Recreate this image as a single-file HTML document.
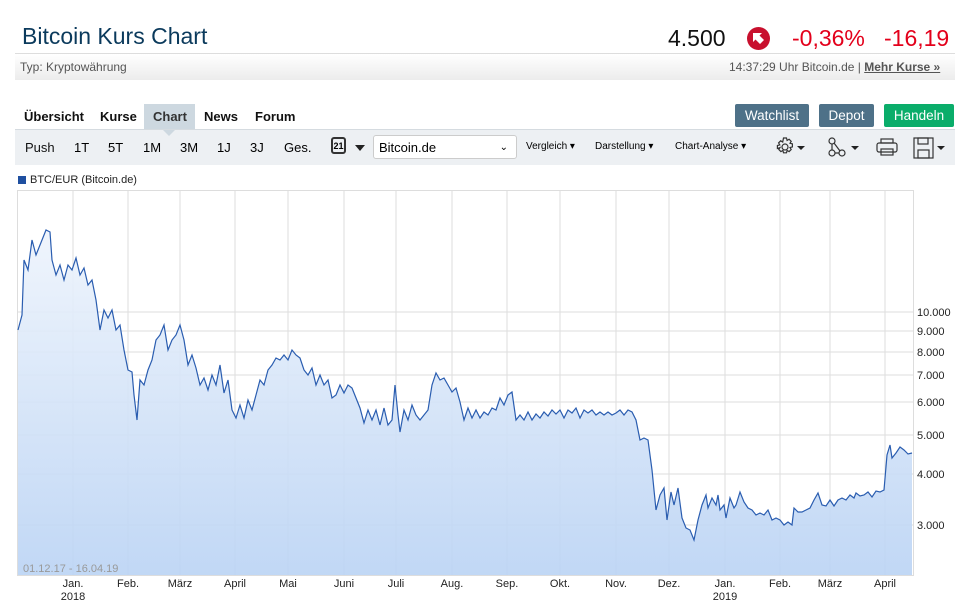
<!DOCTYPE html><html><head><meta charset="utf-8"><style>
body{margin:0;width:965px;height:608px;background:#fff;font-family:"Liberation Sans",sans-serif;position:relative;overflow:hidden}
.a{position:absolute;white-space:nowrap}
.b{font-weight:bold}
.btn{position:absolute;top:104px;height:23px;line-height:23px;color:#fff;font-size:13.5px;text-align:center;border-radius:2px}
</style></head><body>
<div class="a" style="left:22px;top:23px;font-size:23px;color:#0b3a5c">Bitcoin Kurs Chart</div>
<div class="a" style="left:668px;top:25px;font-size:23px;color:#111">4.500</div>
<div class="a" style="left:747px;top:27px;width:23px;height:23px;border-radius:50%;background:#c8102e"><svg width="23" height="23"><path d="M6 6 L15 6 L12.5 8.5 L17 13 L13 17 L8.5 12.5 L6 15 Z" fill="#fff"/></svg></div>
<div class="a" style="left:792px;top:25px;font-size:23px;color:#e3001b">-0,36%</div>
<div class="a" style="left:884px;top:25px;font-size:23px;color:#e3001b">-16,19</div>
<div class="a" style="left:15px;top:53px;width:940px;height:26px;background:linear-gradient(#fff,#ececec);border-top:1px solid #ddd"></div>
<div class="a" style="left:20px;top:60px;font-size:12px;color:#555">Typ: Kryptowährung</div>
<div class="a" style="left:729px;top:60px;font-size:12px;color:#555">14:37:29 Uhr Bitcoin.de | <b style="text-decoration:underline;color:#555">Mehr Kurse »</b></div>
<div class="a" style="left:144px;top:104px;width:51px;height:26px;background:#cdd8e0"></div>
<div class="a b" style="left:24px;top:109px;font-size:13px;color:#111">Übersicht</div>
<div class="a b" style="left:100px;top:109px;font-size:13px;color:#111">Kurse</div>
<div class="a b" style="left:153px;top:109px;font-size:13px;color:#333">Chart</div>
<div class="a b" style="left:204px;top:109px;font-size:13px;color:#111">News</div>
<div class="a b" style="left:255px;top:109px;font-size:13px;color:#111">Forum</div>
<div class="btn" style="left:735px;width:74px;background:#4e7188">Watchlist</div>
<div class="btn" style="left:819px;width:55px;background:#4e7188">Depot</div>
<div class="btn" style="left:884px;width:70px;background:#0aad6a">Handeln</div>
<div class="a" style="left:15px;top:129px;width:940px;height:35px;background:#edf0f3;border-top:1px solid #d5dbe0"></div>
<div class="a" style="left:163px;top:130px;width:0;height:0;border-left:6px solid transparent;border-right:6px solid transparent;border-top:6px solid #cdd8e0"></div>
<div class="a" style="left:25px;top:140px;font-size:13px;color:#111">Push</div>
<div class="a" style="left:74px;top:140px;font-size:13px">1T</div>
<div class="a" style="left:108px;top:140px;font-size:13px">5T</div>
<div class="a" style="left:143px;top:140px;font-size:13px">1M</div>
<div class="a" style="left:180px;top:140px;font-size:13px">3M</div>
<div class="a" style="left:217px;top:140px;font-size:13px">1J</div>
<div class="a" style="left:250px;top:140px;font-size:13px">3J</div>
<div class="a" style="left:284px;top:140px;font-size:13px">Ges.</div>
<div class="a" style="left:331px;top:137px;width:15px;height:17px;border:2px solid #333;border-radius:3px;box-sizing:border-box;font-size:9px;font-weight:bold;text-align:center;line-height:15px">21</div>
<div class="a" style="left:355px;top:145px;border-left:5px solid transparent;border-right:5px solid transparent;border-top:6px solid #222"></div>
<div class="a" style="left:373px;top:135px;width:144px;height:24px;background:#fff;border:1px solid #ccc;border-radius:3px;box-sizing:border-box;font-size:13px;line-height:23px;padding-left:5px">Bitcoin.de<span style="position:absolute;right:8px;font-size:10px">&#8964;</span></div>
<div class="a" style="left:526px;top:141px;font-size:10px">Vergleich ▾</div>
<div class="a" style="left:595px;top:141px;font-size:10px">Darstellung ▾</div>
<div class="a" style="left:675px;top:141px;font-size:10px">Chart-Analyse ▾</div>
<svg class="a" style="left:775px;top:136px" width="180" height="24" fill="none" stroke="#333" stroke-width="1.2">
<path d="M8.5 2h3l.6 2.4 2-1.2 2.1 2.1-1.2 2 2.4.6v3l-2.4.6 1.2 2-2.1 2.1-2-1.2-.6 2.4h-3l-.6-2.4-2 1.2-2.1-2.1 1.2-2L2.4 12.5v-3l2.4-.6-1.2-2 2.1-2.1 2 1.2z"/><circle cx="10" cy="11" r="3"/>
<path d="M22 10 l8 0 l-4 4z" fill="#222" stroke="none"/>
<circle cx="57" cy="5" r="3"/><circle cx="57" cy="17" r="3"/><circle cx="67" cy="17" r="3"/><path d="M57 8v6M60 17h4M59 7l6 8"/>
<path d="M76 10 l8 0 l-4 4z" fill="#222" stroke="none"/>
<rect x="102" y="7" width="20" height="9" rx="2"/><rect x="106" y="3" width="12" height="4"/><rect x="106" y="13" width="12" height="6"/>
<rect x="139" y="2" width="19" height="20"/><rect x="143" y="2" width="10" height="6"/><rect x="143" y="14" width="11" height="8"/>
<path d="M162 10 l8 0 l-4 4z" fill="#222" stroke="none"/>
</svg>
<div class="a" style="left:18px;top:176px;width:8px;height:8px;background:#1f4fa0"></div>
<div class="a" style="left:30px;top:174px;font-size:11px;color:#222">BTC/EUR (Bitcoin.de)</div>
<svg class="a" style="left:0;top:0" width="965" height="608">
<defs><linearGradient id="g" x1="0" y1="0" x2="0" y2="1"><stop offset="0" stop-color="#eef4fc"/><stop offset="1" stop-color="#bad3f4"/></linearGradient></defs>
<rect x="17.5" y="190.5" width="896" height="385" fill="none" stroke="#ddd"/>
<g stroke="#ddd">
<path d="M73 190V575M128 190V575M180 190V575M235 190V575M288 190V575M344 190V575M396 190V575M452 190V575M507 190V575M560 190V575M616 190V575M669 190V575M725 190V575M780 190V575M830 190V575M885 190V575"/>
<path d="M17 312H913M17 331H913M17 352H913M17 375H913M17 402H913M17 435H913M17 474H913M17 525H913"/>
</g>
<polygon fill="url(#g)" opacity="0.9" points="18,575 18,330 22,315 24,260 28,270 32,240 36,255 40,245 44,235 46,230 50,232 52,260 56,275 60,265 64,280 68,265 72,270 76,258 80,275 84,268 88,285 92,280 96,300 100,330 104,310 108,318 112,310 116,330 120,325 124,350 128,370 132,372 134,395 137,420 140,380 144,385 148,370 152,360 156,340 160,335 164,325 168,350 172,340 176,335 180,325 184,340 188,365 192,355 196,368 200,385 204,378 208,390 212,375 216,385 220,365 224,393 228,380 232,410 236,418 240,405 244,418 248,400 252,410 256,395 260,380 264,385 268,370 272,365 276,358 280,360 284,355 288,360 292,350 296,355 300,358 304,370 308,375 312,368 316,385 320,375 324,385 328,380 332,398 336,395 340,385 344,393 348,385 352,388 356,398 360,408 364,423 368,410 372,420 376,410 380,425 384,408 388,425 392,420 395,385 398,415 400,432 404,410 408,420 412,405 416,415 420,420 424,415 428,410 432,385 436,373 440,380 444,378 448,385 452,392 456,388 460,402 464,420 468,408 472,418 476,410 480,418 484,412 488,415 492,408 496,410 500,398 504,405 508,395 512,392 516,420 520,415 524,420 528,412 532,420 536,414 540,418 544,412 548,416 552,410 556,414 560,410 564,418 568,410 572,413 576,408 580,418 584,410 588,413 592,410 596,415 600,412 604,415 608,412 612,415 616,413 620,410 624,415 628,410 632,412 636,420 640,440 644,438 648,440 652,470 656,510 660,495 664,488 667,520 671,492 674,505 678,488 682,518 686,528 690,530 694,540 698,520 702,505 706,495 708,508 712,498 716,505 718,495 720,510 724,505 726,518 730,498 734,508 736,505 740,492 744,502 748,508 752,510 756,515 760,513 764,515 768,510 772,520 776,518 780,520 784,525 788,522 792,525 794,508 798,512 802,512 806,510 810,508 814,500 818,493 822,505 826,506 830,500 834,506 838,500 842,498 846,500 850,495 854,498 856,493 860,496 864,495 868,492 872,497 876,491 880,492 884,490 887,455 890,445 892,458 896,453 900,447 904,450 908,454 912,453 912,575"/>
<polyline fill="none" stroke="#2a5db0" stroke-width="1.2" points="18,330 22,315 24,260 28,270 32,240 36,255 40,245 44,235 46,230 50,232 52,260 56,275 60,265 64,280 68,265 72,270 76,258 80,275 84,268 88,285 92,280 96,300 100,330 104,310 108,318 112,310 116,330 120,325 124,350 128,370 132,372 134,395 137,420 140,380 144,385 148,370 152,360 156,340 160,335 164,325 168,350 172,340 176,335 180,325 184,340 188,365 192,355 196,368 200,385 204,378 208,390 212,375 216,385 220,365 224,393 228,380 232,410 236,418 240,405 244,418 248,400 252,410 256,395 260,380 264,385 268,370 272,365 276,358 280,360 284,355 288,360 292,350 296,355 300,358 304,370 308,375 312,368 316,385 320,375 324,385 328,380 332,398 336,395 340,385 344,393 348,385 352,388 356,398 360,408 364,423 368,410 372,420 376,410 380,425 384,408 388,425 392,420 395,385 398,415 400,432 404,410 408,420 412,405 416,415 420,420 424,415 428,410 432,385 436,373 440,380 444,378 448,385 452,392 456,388 460,402 464,420 468,408 472,418 476,410 480,418 484,412 488,415 492,408 496,410 500,398 504,405 508,395 512,392 516,420 520,415 524,420 528,412 532,420 536,414 540,418 544,412 548,416 552,410 556,414 560,410 564,418 568,410 572,413 576,408 580,418 584,410 588,413 592,410 596,415 600,412 604,415 608,412 612,415 616,413 620,410 624,415 628,410 632,412 636,420 640,440 644,438 648,440 652,470 656,510 660,495 664,488 667,520 671,492 674,505 678,488 682,518 686,528 690,530 694,540 698,520 702,505 706,495 708,508 712,498 716,505 718,495 720,510 724,505 726,518 730,498 734,508 736,505 740,492 744,502 748,508 752,510 756,515 760,513 764,515 768,510 772,520 776,518 780,520 784,525 788,522 792,525 794,508 798,512 802,512 806,510 810,508 814,500 818,493 822,505 826,506 830,500 834,506 838,500 842,498 846,500 850,495 854,498 856,493 860,496 864,495 868,492 872,497 876,491 880,492 884,490 887,455 890,445 892,458 896,453 900,447 904,450 908,454 912,453"/>
<g font-family="Liberation Sans" font-size="11" fill="#222">
<text x="917" y="316">10.000</text><text x="917" y="335">9.000</text><text x="917" y="356">8.000</text><text x="917" y="379">7.000</text><text x="917" y="406">6.000</text><text x="917" y="439">5.000</text><text x="917" y="478">4.000</text><text x="917" y="529">3.000</text>
<g text-anchor="middle"><text x="73" y="587">Jan.</text><text x="73" y="600">2018</text><text x="128" y="587">Feb.</text><text x="180" y="587">März</text><text x="235" y="587">April</text><text x="288" y="587">Mai</text><text x="344" y="587">Juni</text><text x="396" y="587">Juli</text><text x="452" y="587">Aug.</text><text x="507" y="587">Sep.</text><text x="560" y="587">Okt.</text><text x="616" y="587">Nov.</text><text x="669" y="587">Dez.</text><text x="725" y="587">Jan.</text><text x="725" y="600">2019</text><text x="780" y="587">Feb.</text><text x="830" y="587">März</text><text x="885" y="587">April</text></g>
<text x="23" y="572" fill="#999">01.12.17 - 16.04.19</text>
</g>
</svg>
</body></html>
